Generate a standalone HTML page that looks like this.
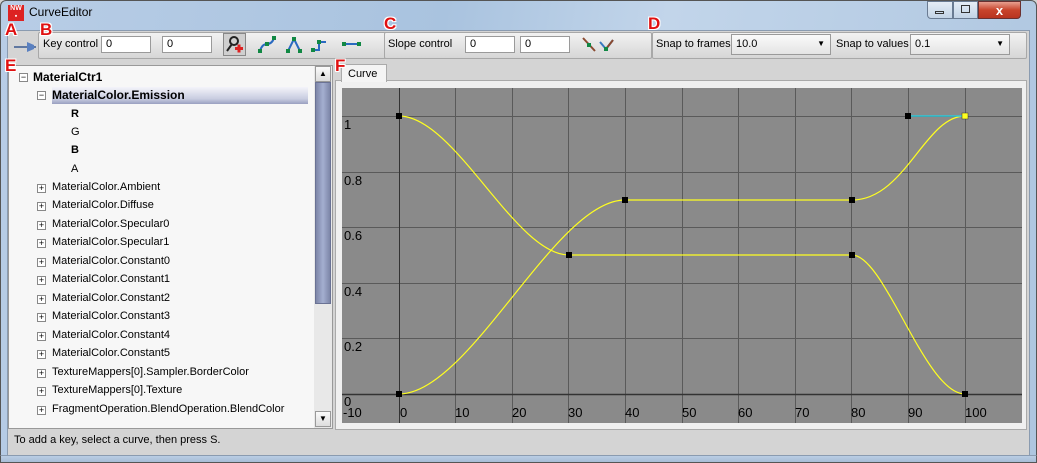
<!DOCTYPE html>
<html><head><style>
*{margin:0;padding:0;box-sizing:border-box}
body{width:1037px;height:463px;overflow:hidden;font-family:"Liberation Sans",sans-serif;font-size:11px;color:#000;position:relative;background:#d4d4d4}
.a{position:absolute}
.frame{left:0;top:0;width:1037px;height:463px;background:linear-gradient(100deg,#b8cde6,#a9c3df 40%,#c2d5ea 60%,#aec6e0);border:1px solid #555;border-radius:6px 6px 0 0}
.inner{left:7px;top:30px;width:1023px;height:426px;background:#d4d4d4;border:1px solid #8a9bb0}
.tb{top:32px;height:27px;background:linear-gradient(#f2f2f2,#d6d6d6);border:1px solid #a8a8a8;border-radius:2px}
.inp{height:17px;background:#fff;border:1px solid #9a9a9a;font-size:11px;padding:2px 4px;line-height:11px}
.lbl{font-size:11px}
.red{color:#e01010;font-weight:bold;font-size:17px;text-shadow:1px 1px 0 #fff,-1px -1px 0 #fff,1px -1px 0 #fff,-1px 1px 0 #fff;font-family:"Liberation Sans",sans-serif}
.row{position:absolute;left:52px;font-size:11px;white-space:nowrap}
.pm{position:absolute;left:37px;width:9px;height:9px;border:1px solid #888;background:#fff;font-size:9px;line-height:7px;text-align:center}
</style></head><body>
<div class="a frame"></div>
<div class="a" style="left:8px;top:5px;width:16px;height:16px;background:#d22;color:#fff;font-size:7px;font-weight:bold;line-height:8px;text-align:center">NW<br>▪</div>
<div class="a" style="left:29px;top:5px;font-size:12px">CurveEditor</div>
<div class="a" style="left:927px;top:1px;width:26px;height:18px;border:1px solid #6a7b92;border-radius:0 0 0 4px;background:linear-gradient(#e5edf6,#c2d3e6)"></div>
<div class="a" style="left:935px;top:11px;width:9px;height:3px;border:1px solid #333"></div>
<div class="a" style="left:953px;top:1px;width:25px;height:18px;border:1px solid #6a7b92;background:linear-gradient(#e5edf6,#c2d3e6)"></div>
<div class="a" style="left:961px;top:5px;width:9px;height:8px;border:1px solid #333"></div>
<div class="a" style="left:978px;top:1px;width:43px;height:18px;border:1px solid #6a3030;border-radius:0 0 4px 0;background:linear-gradient(#e8a090,#c8442c 50%,#b83420);color:#fff;font-weight:bold;text-align:center;font-size:13px;line-height:17px">x</div>
<div class="a inner"></div>

<div class="a" style="left:12px;top:40px;width:26px;height:14px"><svg width="26" height="14"><line x1="2" y1="7" x2="24" y2="7" stroke="#3a5a90" stroke-width="1.5"/><path d="M15 2 L15 12 L22 9 L22 5Z" fill="#5a80c0"/></svg></div>
<div class="a tb" style="left:38px;width:352px"></div>
<div class="a lbl" style="left:43px;top:38px">Key control</div>
<div class="a inp" style="left:101px;top:36px;width:50px">0</div>
<div class="a inp" style="left:162px;top:36px;width:50px">0</div>
<div class="a" style="left:223px;top:33px;width:23px;height:23px;background:#cfcfcf;border:1px solid #888"><svg width="21" height="21"><circle cx="10" cy="7" r="4" fill="none" stroke="#222" stroke-width="2"/><line x1="8" y1="10" x2="3" y2="17" stroke="#222" stroke-width="2"/><rect x="11" y="13" width="8" height="3" fill="#d22"/><rect x="13.5" y="10.5" width="3" height="8" fill="#d22"/></svg></div>
<svg class="a" style="left:256px;top:34px" width="110" height="22">
<path d="M4 17 Q6 10 11 10 T18 4" fill="none" stroke="#2a6ac0" stroke-width="2"/><rect x="2" y="15" width="4" height="4" fill="#184"/><rect x="16" y="2" width="4" height="4" fill="#184"/><rect x="9" y="8" width="4" height="4" fill="#184"/>
<path d="M32 17 L38 5 L44 17" fill="none" stroke="#2a6ac0" stroke-width="2"/><rect x="30" y="15" width="4" height="4" fill="#184"/><rect x="36" y="3" width="4" height="4" fill="#184"/><rect x="42" y="15" width="4" height="4" fill="#184"/>
<path d="M58 16 L63 16 L63 8 L70 8" fill="none" stroke="#2a6ac0" stroke-width="2"/><rect x="55" y="14" width="4" height="4" fill="#184"/><rect x="61" y="6" width="4" height="4" fill="#184"/>
<path d="M88 10 L104 10" stroke="#2a6ac0" stroke-width="2"/><rect x="86" y="8" width="4" height="4" fill="#184"/><rect x="101" y="8" width="4" height="4" fill="#184"/>
</svg>
<div class="a tb" style="left:384px;width:268px"></div>
<div class="a lbl" style="left:388px;top:38px">Slope control</div>
<div class="a inp" style="left:465px;top:36px;width:50px">0</div>
<div class="a inp" style="left:520px;top:36px;width:50px">0</div>
<svg class="a" style="left:578px;top:34px" width="60" height="22"><line x1="5" y1="4" x2="17" y2="17" stroke="#8a4a30" stroke-width="2"/><rect x="9" y="9" width="4" height="4" fill="#184"/><path d="M22 8 L28 15 L35 6" fill="none" stroke="#3a7ac0" stroke-width="2"/><path d="M28 15 L35 6" stroke="#8a4a30" stroke-width="2"/><rect x="26" y="13" width="4" height="4" fill="#184"/></svg>
<div class="a tb" style="left:652px;width:375px"></div>
<div class="a lbl" style="left:656px;top:38px">Snap to frames</div>
<div class="a inp" style="left:731px;top:34px;width:100px;height:21px;background:linear-gradient(#fafafa,#e4e4e4);line-height:15px">10.0<span style="position:absolute;right:5px;top:1px;font-size:8px">▼</span></div>
<div class="a lbl" style="left:836px;top:38px">Snap to values</div>
<div class="a inp" style="left:910px;top:34px;width:100px;height:21px;background:linear-gradient(#fafafa,#e4e4e4);line-height:15px">0.1<span style="position:absolute;right:5px;top:1px;font-size:8px">▼</span></div>

<div class="a" style="left:8px;top:65px;width:325px;height:364px;background:#f7f7f7;border:1px solid #999"></div>
<div class="a" style="left:314px;top:66px;width:18px;height:362px;background:#e8e8e8"></div>
<div class="a" style="left:315px;top:66px;width:16px;height:16px;background:linear-gradient(#fafafa,#ddd);border:1px solid #999;font-size:8px;text-align:center;line-height:13px">▲</div>
<div class="a" style="left:315px;top:82px;width:16px;height:222px;background:linear-gradient(90deg,#7d86a8,#a4afd0,#7d86a8);border:1px solid #6a7294"></div>
<div class="a" style="left:315px;top:411px;width:16px;height:16px;background:linear-gradient(#fafafa,#ddd);border:1px solid #999;font-size:8px;text-align:center;line-height:13px">▼</div>
<div class="pm" style="left:19px;top:73px">−</div><div class="row" style="left:33px;top:70px;font-weight:bold;font-size:12px">MaterialCtr1</div>
<div class="a" style="left:52px;top:87px;width:256px;height:17px;background:linear-gradient(#f4f4fa,#c8cce0 70%,#9aa0c0)"></div>
<div class="pm" style="top:91px">−</div><div class="row" style="top:88px;font-weight:bold;font-size:12px">MaterialColor.Emission</div>
<div class="row" style="left:71px;top:108px;font-weight:bold">R</div>
<div class="row" style="left:71px;top:126px">G</div>
<div class="row" style="left:71px;top:144px;font-weight:bold">B</div>
<div class="row" style="left:71px;top:163px">A</div>
<div class="pm" style="top:184px">+</div><div class="row" style="top:181px">MaterialColor.Ambient</div>
<div class="pm" style="top:202px">+</div><div class="row" style="top:199px">MaterialColor.Diffuse</div>
<div class="pm" style="top:221px">+</div><div class="row" style="top:218px">MaterialColor.Specular0</div>
<div class="pm" style="top:239px">+</div><div class="row" style="top:236px">MaterialColor.Specular1</div>
<div class="pm" style="top:258px">+</div><div class="row" style="top:255px">MaterialColor.Constant0</div>
<div class="pm" style="top:276px">+</div><div class="row" style="top:273px">MaterialColor.Constant1</div>
<div class="pm" style="top:295px">+</div><div class="row" style="top:292px">MaterialColor.Constant2</div>
<div class="pm" style="top:313px">+</div><div class="row" style="top:310px">MaterialColor.Constant3</div>
<div class="pm" style="top:332px">+</div><div class="row" style="top:329px">MaterialColor.Constant4</div>
<div class="pm" style="top:350px">+</div><div class="row" style="top:347px">MaterialColor.Constant5</div>
<div class="pm" style="top:369px">+</div><div class="row" style="top:366px">TextureMappers[0].Sampler.BorderColor</div>
<div class="pm" style="top:387px">+</div><div class="row" style="top:384px">TextureMappers[0].Texture</div>
<div class="pm" style="top:406px">+</div><div class="row" style="top:403px">FragmentOperation.BlendOperation.BlendColor</div>

<div class="a" style="left:335px;top:80px;width:692px;height:350px;background:#f0f0f0;border:1px solid #aaa"></div>
<div class="a" style="left:341px;top:64px;width:46px;height:18px;background:#f4f4f4;border:1px solid #aaa;border-bottom:none;padding:3px 6px">Curve</div>
<svg class="a" style="left:0;top:0" width="1037" height="463">
<rect x="342" y="88" width="680" height="335" fill="#8a8a8a"/>
<g stroke="#5a5a5a" stroke-width="1">
<line x1="455.5" y1="88" x2="455.5" y2="423"/><line x1="512.5" y1="88" x2="512.5" y2="423"/><line x1="568.5" y1="88" x2="568.5" y2="423"/><line x1="625.5" y1="88" x2="625.5" y2="423"/><line x1="682.5" y1="88" x2="682.5" y2="423"/><line x1="738.5" y1="88" x2="738.5" y2="423"/><line x1="795.5" y1="88" x2="795.5" y2="423"/><line x1="851.5" y1="88" x2="851.5" y2="423"/><line x1="908.5" y1="88" x2="908.5" y2="423"/><line x1="965.5" y1="88" x2="965.5" y2="423"/>
<line x1="342" y1="116.5" x2="1022" y2="116.5"/><line x1="342" y1="172.5" x2="1022" y2="172.5"/><line x1="342" y1="227.5" x2="1022" y2="227.5"/><line x1="342" y1="283.5" x2="1022" y2="283.5"/><line x1="342" y1="338.5" x2="1022" y2="338.5"/>
</g>
<line x1="399.5" y1="88" x2="399.5" y2="423" stroke="#333"/>
<line x1="342" y1="394.5" x2="1022" y2="394.5" stroke="#333" stroke-width="1.5"/>
<g font-family="Liberation Sans" font-size="13" fill="#000">
<text x="344" y="129">1</text><text x="344" y="185">0.8</text><text x="344" y="240">0.6</text><text x="344" y="296">0.4</text><text x="344" y="351">0.2</text><text x="344" y="406">0</text>
<text x="343" y="417">-10</text><text x="400" y="417">0</text><text x="455" y="417">10</text><text x="512" y="417">20</text><text x="568" y="417">30</text><text x="625" y="417">40</text><text x="682" y="417">50</text><text x="738" y="417">60</text><text x="795" y="417">70</text><text x="851" y="417">80</text><text x="908" y="417">90</text><text x="965" y="417">100</text>
</g>
<g fill="none" stroke="#ffff20" stroke-width="1.2">
<path d="M399 116 C455 116 515 255 569 255 L852 255 C885 255 925 394 965 394"/>
<path d="M399 394 C470 394 555 200 625 200 L852 200 C905 200 925 116 965 116"/>
</g>
<line x1="908" y1="116" x2="965" y2="116" stroke="#30c8d8" stroke-width="1.5"/>
<g fill="#000"><rect x="396" y="113" width="6" height="6"/><rect x="396" y="391" width="6" height="6"/><rect x="566" y="252" width="6" height="6"/><rect x="622" y="197" width="6" height="6"/><rect x="849" y="197" width="6" height="6"/><rect x="849" y="252" width="6" height="6"/><rect x="962" y="391" width="6" height="6"/><rect x="905" y="113" width="6" height="6"/></g>
<rect x="962" y="113" width="6" height="6" fill="#ffff20" stroke="#333" stroke-width="0.5"/>
</svg>
<div class="a" style="left:14px;top:434px">To add a key, select a curve, then press S.</div>
<div class="a" style="left:0;top:455px;width:1037px;height:8px;background:linear-gradient(#b9cde4,#a8bdd6);border:1px solid #555;border-top:1px solid #8a9bb0"></div>

<div class="a red" style="left:5px;top:20px">A</div>
<div class="a red" style="left:40px;top:20px">B</div>
<div class="a red" style="left:384px;top:14px">C</div>
<div class="a red" style="left:648px;top:14px">D</div>
<div class="a red" style="left:5px;top:56px">E</div>
<div class="a red" style="left:335px;top:56px">F</div>
</body></html>
